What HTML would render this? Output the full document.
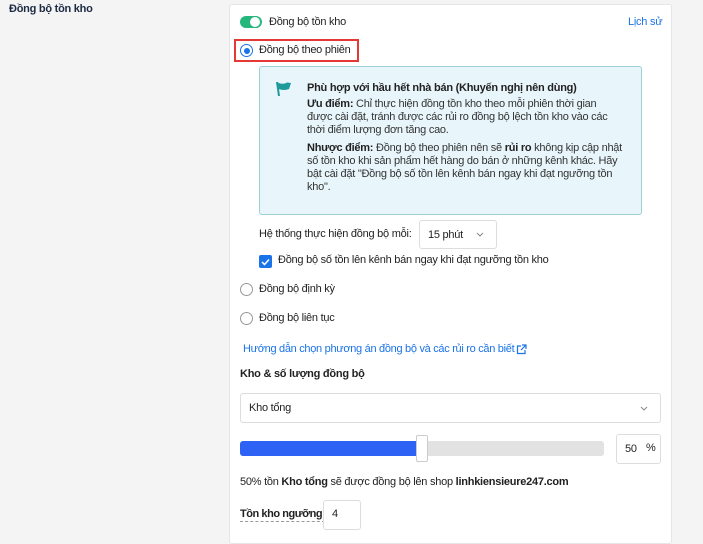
<!DOCTYPE html>
<html><head><meta charset="utf-8"><style>
*{margin:0;padding:0;box-sizing:border-box}
body{width:703px;height:540px;background:#f4f4f4;font-family:"Liberation Sans",Arial,sans-serif;font-size:11px;letter-spacing:-0.25px;color:#222;position:relative;overflow:hidden}
.a{position:absolute;white-space:nowrap}
.card{position:absolute;left:229px;top:4px;width:443px;height:540px;background:#fff;border:1px solid #e6e6e6;border-radius:3px}
.radio{position:absolute;width:13px;height:13px;border:1px solid #999;border-radius:50%;background:#fff}
.info{position:absolute;left:259px;top:66px;width:383px;height:149px;background:#e8f6fb;border:1px solid #9ccfd6;border-radius:3px}
.info p{position:absolute;left:47px;line-height:13px;white-space:nowrap;color:#333}
.box{position:absolute;border:1px solid #ddd;border-radius:3px;background:#fff}
b{font-weight:bold;color:#222}
</style></head><body>
<div class="a" style="left:9px;top:3px;font-weight:bold;color:#1d2b44">Đồng bộ tồn kho</div>
<div class="card"></div>
<div class="a" style="left:240px;top:16px;width:22px;height:12px;border-radius:6px;background:#25b77b"></div>
<div class="a" style="left:250px;top:17px;width:10px;height:10px;border-radius:50%;background:#fff"></div>
<div class="a" style="left:269px;top:16px">Đồng bộ tồn kho</div>
<div class="a" style="left:628px;top:16px;color:#1a73e8">Lịch sử</div>
<div class="a" style="left:234px;top:39px;width:125px;height:23px;border:2px solid #e53935"></div>
<div class="radio" style="left:240px;top:44px;border-color:#1a73e8"></div>
<div class="a" style="left:243.5px;top:47.5px;width:6px;height:6px;border-radius:50%;background:#1a73e8"></div>
<div class="a" style="left:259px;top:44px">Đồng bộ theo phiên</div>
<div class="info">
<svg style="position:absolute;left:15px;top:14px" width="18" height="16" viewBox="0 0 18 16"><path d="M2 1 L4 15" stroke="#1f9a9a" stroke-width="2"/><path d="M2.5 1.5 Q8 4 12 1.5 L16 2 L14 8 Q9 10 3.5 8 Z" fill="#1f9a9a"/></svg>
<p style="top:15px;font-weight:bold;color:#222">Phù hợp với hầu hết nhà bán (Khuyến nghị nên dùng)</p>
<p style="top:31px"><b>Ưu điểm:</b> Chỉ thực hiện đồng tồn kho theo mỗi phiên thời gian<br>được cài đặt, tránh được các rủi ro đồng bộ lệch tồn kho vào các<br>thời điểm lượng đơn tăng cao.</p>
<p style="top:75px"><b>Nhược điểm:</b> Đồng bộ theo phiên nên sẽ <b>rủi ro</b> không kịp cập nhật<br>số tồn kho khi sản phẩm hết hàng do bán ở những kênh khác. Hãy<br>bật cài đặt "Đồng bộ số tồn lên kênh bán ngay khi đạt ngưỡng tồn<br>kho".</p>
</div>
<div class="a" style="left:259px;top:228px">Hệ thống thực hiện đồng bộ mỗi:</div>
<div class="box" style="left:419px;top:220px;width:78px;height:29px"></div>
<div class="a" style="left:428px;top:229px">15 phút</div>
<svg class="a" style="left:476px;top:232px" width="8" height="5"><path d="M1 1 L4 4 L7 1" stroke="#888" fill="none"/></svg>
<div class="a" style="left:259px;top:255px;width:13px;height:13px;background:#1a73e8;border-radius:2px"></div>
<svg class="a" style="left:261px;top:258px" width="9" height="8"><path d="M1 4 L3.5 6.5 L8 1.5" stroke="#fff" stroke-width="1.5" fill="none"/></svg>
<div class="a" style="left:278px;top:254px">Đồng bộ số tồn lên kênh bán ngay khi đạt ngưỡng tồn kho</div>
<div class="radio" style="left:240px;top:283px"></div>
<div class="a" style="left:259px;top:283px">Đồng bộ định kỳ</div>
<div class="radio" style="left:240px;top:312px"></div>
<div class="a" style="left:259px;top:312px">Đồng bộ liên tục</div>
<div class="a" style="left:243px;top:343px;color:#1a73e8;letter-spacing:-0.3px">Hướng dẫn chọn phương án đồng bộ và các rủi ro cần biết</div>
<svg class="a" style="left:516px;top:344px" width="11" height="11" viewBox="0 0 11 11"><path d="M5 2 H1.5 V9.5 H9 V6" stroke="#1a73e8" fill="none" stroke-width="1.2"/><path d="M6 1 H10 V5 M10 1 L5 6" stroke="#1a73e8" fill="none" stroke-width="1.2"/></svg>
<div class="a" style="left:240px;top:368px;font-weight:bold">Kho &amp; số lượng đồng bộ</div>
<div class="box" style="left:240px;top:393px;width:421px;height:30px"></div>
<div class="a" style="left:249px;top:402px">Kho tổng</div>
<svg class="a" style="left:640px;top:406px" width="8" height="5"><path d="M1 1 L4 4 L7 1" stroke="#888" fill="none"/></svg>
<div class="a" style="left:240px;top:441px;width:364px;height:15px;background:#e2e2e2;border-radius:3px"></div>
<div class="a" style="left:240px;top:441px;width:178px;height:15px;background:#2d62f5;border-radius:3px 0 0 3px"></div>
<div class="a" style="left:416px;top:435px;width:12px;height:27px;background:#fff;border:1px solid #ccc;border-radius:2px"></div>
<div class="box" style="left:616px;top:434px;width:45px;height:30px"></div>
<div class="a" style="left:625px;top:443px">50</div>
<div class="a" style="left:646px;top:442px">%</div>
<div class="a" style="left:240px;top:476px">50% tồn <b>Kho tổng</b> sẽ được đồng bộ lên shop <b>linhkiensieure247.com</b></div>
<div class="a" style="left:240px;top:507px;font-weight:bold;border-bottom:1px dashed #999;line-height:14px;letter-spacing:-0.45px">Tồn kho ngưỡng:</div>
<div class="box" style="left:323px;top:500px;width:38px;height:30px"></div>
<div class="a" style="left:332px;top:508px">4</div>
</body></html>
